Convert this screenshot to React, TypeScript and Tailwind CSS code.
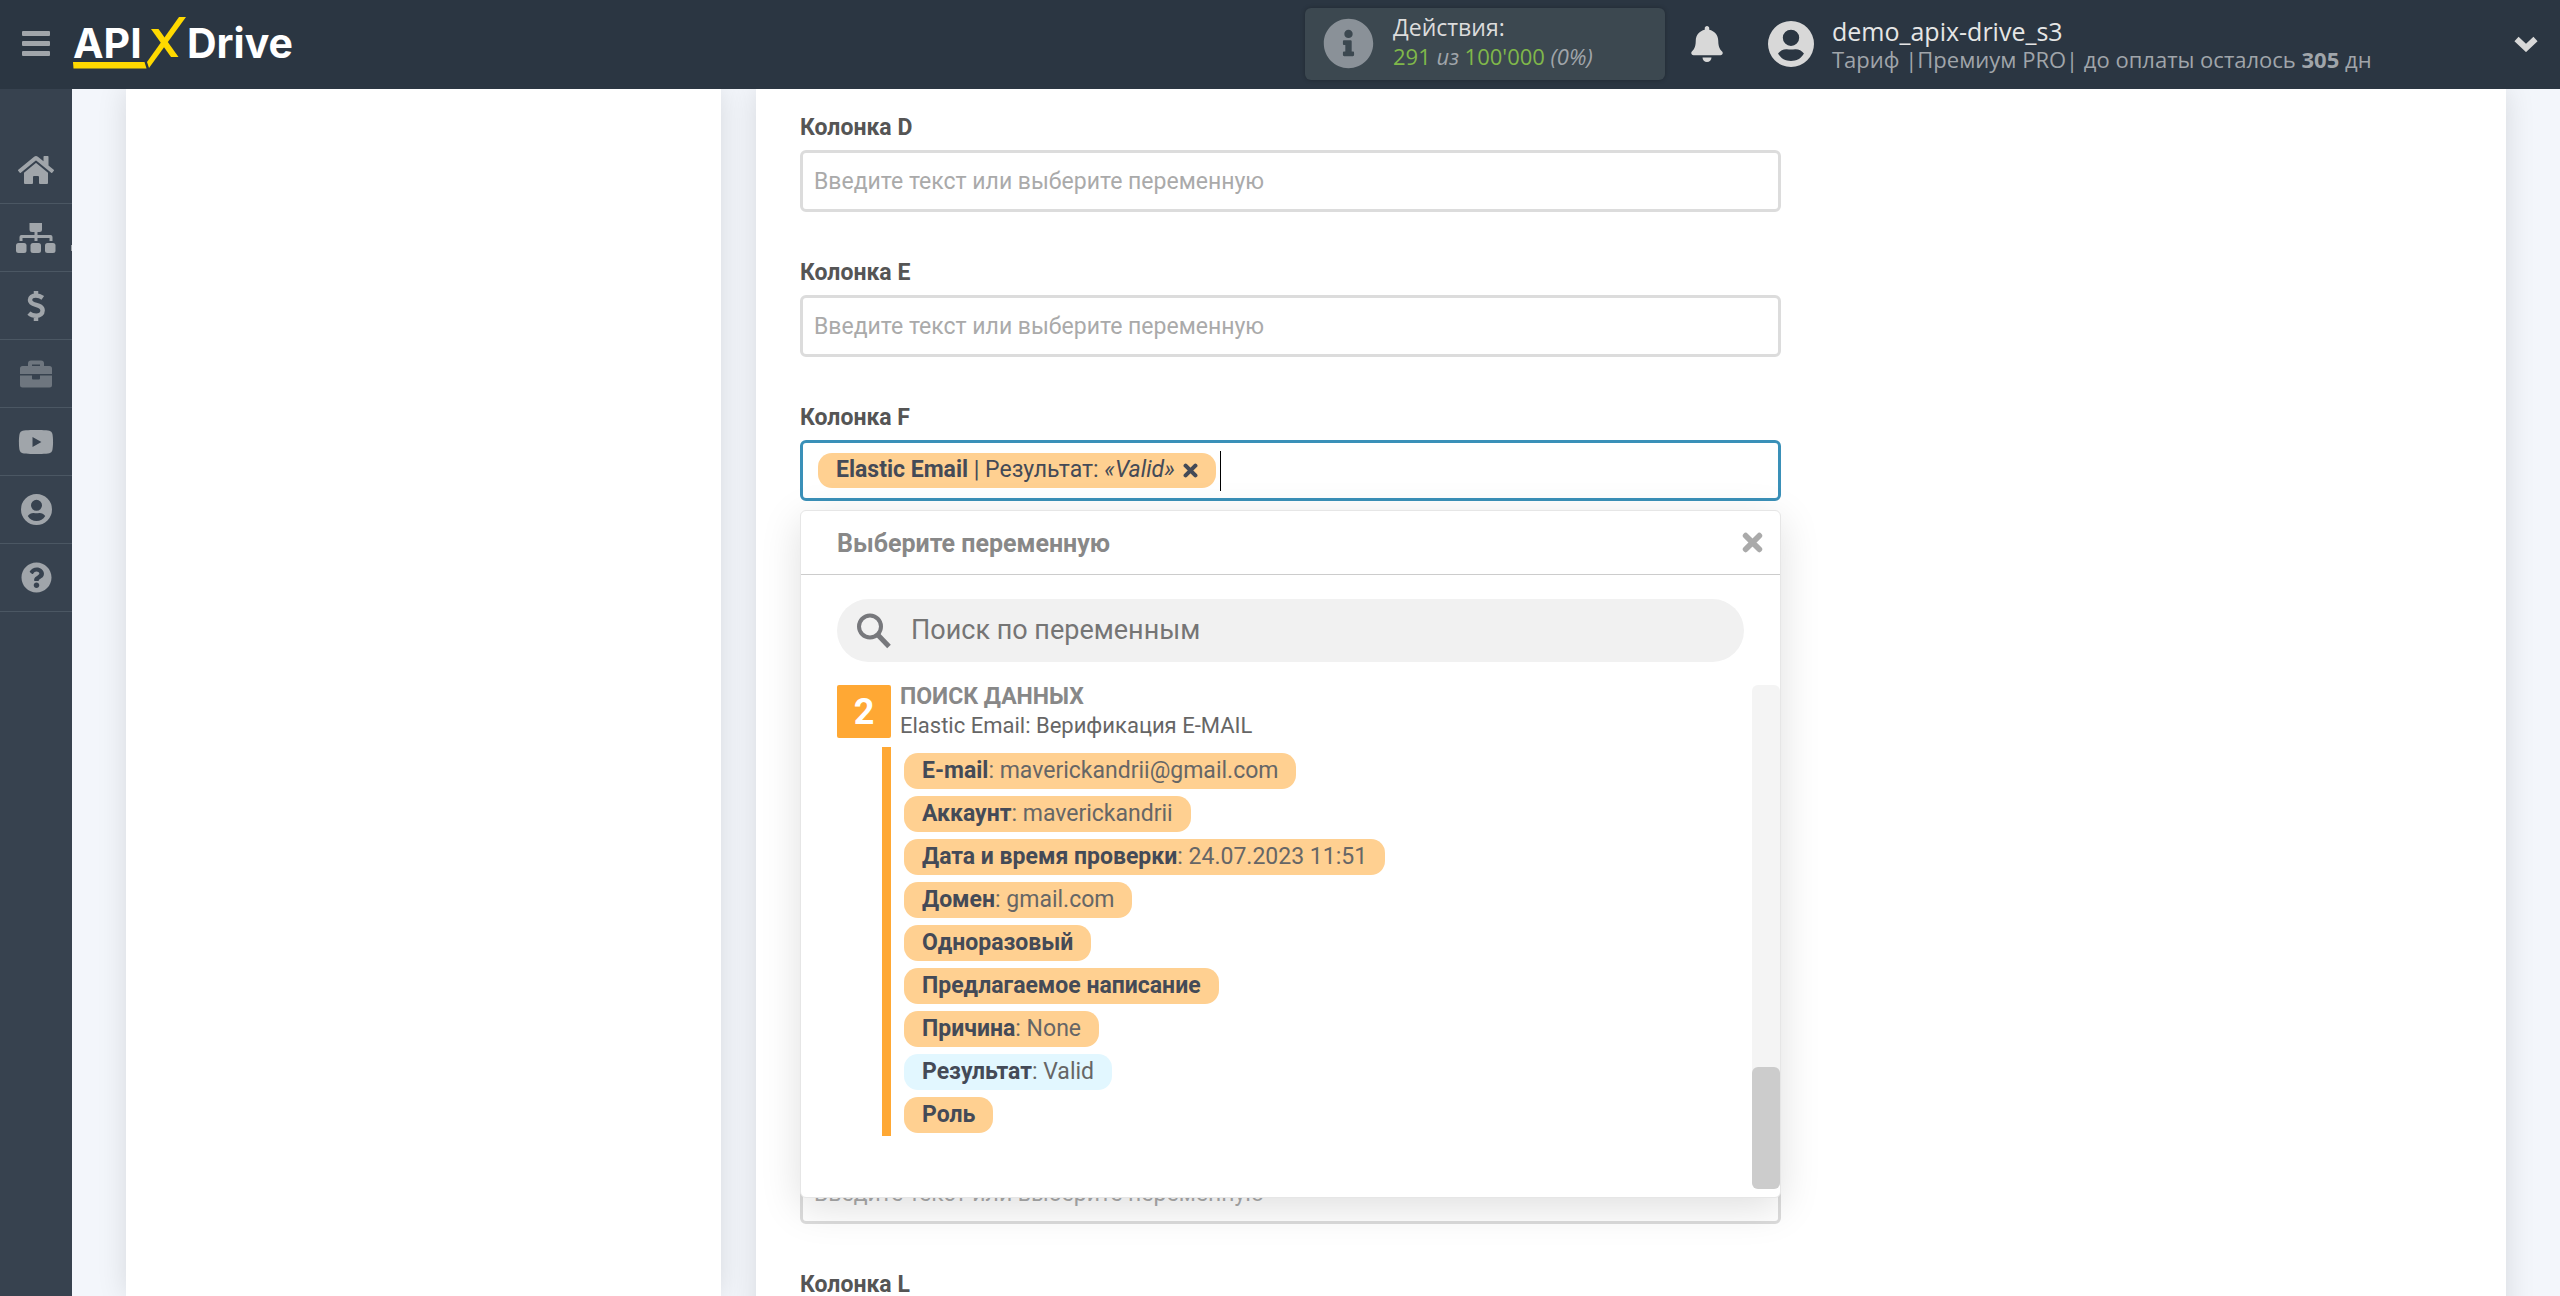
import React from "react";
import { FaBell, FaHome, FaInfoCircle, FaQuestionCircle, FaYoutube } from "react-icons/fa";

function UserIcon({ className }: { className: string }) {
  return (
    <svg viewBox="0 0 32 32" className={className} fill="currentColor" aria-hidden="true">
      <path
        fillRule="evenodd"
        d="M16 0a16 16 0 1 0 0 32a16 16 0 1 0 0-32zM16 6a5.7 5.7 0 1 1 0 11.4a5.7 5.7 0 1 1 0-11.4zM7 22.6C8.6 20.4 11 19.4 13.2 19.6C15 20 17 20 18.8 19.6C21 19.4 23.4 20.4 25 22.6C23 26.2 19.8 27.8 16 27.8S9 26.2 7 22.6z"
      />
    </svg>
  );
}

function SitemapIcon() {
  return (
    <svg viewBox="0 0 40 30" className="h-[30px] w-10" fill="currentColor" aria-hidden="true">
      <path d="M13.500 0H26V6.500a2.500 2.500 0 0 1-2.500 2.500H16a2.500 2.500 0 0 1-2.500-2.500z" />
      <path d="M18.500 8h3v10h-3z" />
      <path d="M3.500 18v-4a2 2 0 0 1 2-2h29a2 2 0 0 1 2 2v4h-3v-3h-27v3z" />
      <rect x="0" y="20" width="10.500" height="10" rx="2.500" />
      <rect x="14.500" y="20" width="10.500" height="10" rx="2.500" />
      <rect x="29" y="20" width="10.500" height="10" rx="2.500" />
    </svg>
  );
}

function DollarIcon() {
  return (
    <svg viewBox="0 0 18 30" className="h-[30px] w-[18px]" fill="none" stroke="currentColor" strokeWidth="4.500" aria-hidden="true">
      <path d="M15.800 6.800C13.500 5.200 11.200 4.600 8.800 4.600C5.400 4.600 3 6.300 3 8.900C3 15.500 15.600 12.200 15.600 19.500C15.600 22.600 13 24.800 9.200 24.800C6.400 24.800 4 24 1.900 22.100M9 0v5M9 24v6" />
    </svg>
  );
}

function BriefcaseIcon() {
  return (
    <svg viewBox="0 0 32 28" className="h-7 w-8" fill="currentColor" aria-hidden="true">
      <path
        fillRule="evenodd"
        d="M8 6V3.500A3 3 0 0 1 11 .5H21A3 3 0 0 1 24 3.500V6H29.500A2.500 2.500 0 0 1 32 8.500V14H0V8.500A2.500 2.500 0 0 1 2.500 6zM12 4.500V6H20V4.500z"
      />
      <path d="M0 15.500H12V18.500A1 1 0 0 0 13 19.500H19A1 1 0 0 0 20 18.500V15.500H32V25A2.500 2.500 0 0 1 29.500 27.500H2.500A2.500 2.500 0 0 1 0 25z" />
    </svg>
  );
}

function CrossIcon({ className }: { className: string }) {
  return (
    <svg viewBox="0 0 20 20" className={className} stroke="currentColor" strokeWidth="5.500" strokeLinecap="round" aria-hidden="true">
      <path d="M3.500 3.500L16.500 16.500M16.500 3.500L3.500 16.500" />
    </svg>
  );
}

function Logo() {
  return (
    <a href="#" aria-label="APIXDrive" className="relative flex h-14 w-[220px] items-center justify-between font-['Inter',sans-serif] text-[41px] leading-[54px] font-bold text-white">
      <span>API</span>
      <span>Drive</span>
      <svg viewBox="0 0 220 56" className="absolute inset-0 h-14 w-[220px]" fill="#ffd900" aria-hidden="true">
        <path d="M106 2H113L76 53L74 47z" />
        <path d="M78 14H85.500L105.500 42H98z" />
        <path d="M0 47H71.500L73.500 53.500H0.500z" />
      </svg>
    </a>
  );
}

function Header() {
  return (
    <header className="relative z-20 flex h-[89px] shrink-0 items-center bg-[#2b3642] pb-0.5 font-['Open_Sans',sans-serif]">
      <button aria-label="Меню" className="ml-[22px] flex w-7 flex-col gap-[5px]">
        <span className="h-[5px] w-full rounded-[1px] bg-[#a0a5aa]" />
        <span className="h-[5px] w-full rounded-[1px] bg-[#a0a5aa]" />
        <span className="h-[5px] w-full rounded-[1px] bg-[#a0a5aa]" />
      </button>
      <div className="ml-[23px] pb-0.5">
        <Logo />
      </div>
      <div className="ml-auto flex h-[72px] w-[360px] items-center gap-[19px] rounded-md bg-[#3c4850] pl-[18px] shadow-[0_0_4px_rgba(0,0,0,0.25)]">
        <FaInfoCircle className="size-[51px] text-[#8a9198]" />
        <div className="pb-1 text-[22px] leading-[29px]">
          <p className="text-[23px] text-[#dcdcdc]">Действия:</p>
          <p className="text-[#a0a5aa]">
            <span className="text-[#80b84a]">291</span> <i>из</i> <span className="text-[#80b84a]">100'000</span> <i>(0%)</i>
          </p>
        </div>
      </div>
      <button aria-label="Уведомления" className="ml-[26px] text-[#d8d8d8]">
        <FaBell className="h-9 w-8" />
      </button>
      <button className="ml-[45px] flex w-[792px] items-center text-left">
        <UserIcon className="size-[46px] shrink-0 text-[#d8d8d8]" />
        <span className="ml-[18px] block pt-0.5">
          <span className="block text-[25px] leading-7 text-[#e6e6e6]">demo_apix-drive_s3</span>
          <span className="block text-[22px] leading-7 text-[#a0a5aa]">
            Тариф |Премиум PRO| до оплаты осталось <b>305</b> дн
          </span>
        </span>
        <svg viewBox="0 0 24 16" className="mr-[22px] ml-auto h-4 w-6 text-[#d8d8d8]" fill="none" stroke="currentColor" strokeWidth="6" aria-hidden="true">
          <path d="M2.500 3L12 12L21.500 3" strokeLinejoin="miter" />
        </svg>
      </button>
    </header>
  );
}

const NAV = [
  { label: "Главная", icon: <FaHome className="h-9 w-9" /> },
  { label: "Связи", icon: <SitemapIcon />, open: true },
  { label: "Оплата", icon: <DollarIcon /> },
  { label: "Проекты", icon: <BriefcaseIcon />, dim: true },
  { label: "Видео", icon: <FaYoutube className="size-9" /> },
  { label: "Профиль", icon: <UserIcon className="size-[31px]" /> },
  { label: "Помощь", icon: <FaQuestionCircle className="size-[31px]" /> },
];

function Sidebar() {
  return (
    <nav className="w-[72px] shrink-0 bg-[#37424f] pt-[47px]">
      {NAV.map((item) => (
        <a
          key={item.label}
          href="#"
          aria-label={item.label}
          className={
            "relative flex h-[68px] items-center justify-center border-b border-[#4b5763] " +
            (item.dim ? "text-[#6e767f]" : "text-[#a0a5aa]")
          }
        >
          {item.icon}
          {item.open && <span className="absolute right-0 bottom-5 h-1.5 w-px bg-[#a0a5aa]" />}
        </a>
      ))}
    </nav>
  );
}

function Field({ name, tall = true }: { name: string; tall?: boolean }) {
  return (
    <div>
      <label htmlFor={"col" + name} className="block text-[23px] leading-[30px] font-bold text-[#555]">
        Колонка {name}
      </label>
      <input
        id={"col" + name}
        placeholder="Введите текст или выберите переменную"
        className={
          "mt-[7px] block w-full rounded-md border-[3px] border-[#dcdcdc] bg-white px-[11px] text-[23px] placeholder:text-[#aaa] " +
          (tall ? "h-[62px]" : "h-[61px]")
        }
      />
    </div>
  );
}

const VARIABLES: { name: string; value?: string; selected?: boolean }[] = [
  { name: "E-mail", value: "maverickandrii@gmail.com" },
  { name: "Аккаунт", value: "maverickandrii" },
  { name: "Дата и время проверки", value: "24.07.2023 11:51" },
  { name: "Домен", value: "gmail.com" },
  { name: "Одноразовый" },
  { name: "Предлагаемое написание" },
  { name: "Причина", value: "None" },
  { name: "Результат", value: "Valid", selected: true },
  { name: "Роль" },
];

function VariablePicker() {
  return (
    <div className="absolute inset-x-0 top-full z-10 mt-[9px] rounded-md border border-[#e6e6e6] bg-white pb-2 shadow-[0_10px_40px_rgba(0,0,0,0.13)]">
      <div className="flex h-16 items-center justify-between border-b border-[#ccc] pr-[17px] pl-9">
        <h2 className="pt-0.5 text-[25px] font-bold text-[#888]">Выберите переменную</h2>
        <button aria-label="Закрыть" className="text-[#aaa]">
          <CrossIcon className="size-[21px]" />
        </button>
      </div>
      <label className="mt-6 mr-9 ml-9 flex h-[63px] items-center rounded-full bg-[#f1f1f1] pl-5">
        <svg viewBox="0 0 34 36" className="h-9 w-[34px] text-[#77787c]" fill="none" stroke="currentColor" strokeWidth="4" aria-label="Поиск">
          <circle cx="13" cy="13.500" r="11" />
          <path d="M20.500 21.500L32 33.500" strokeWidth="5" />
        </svg>
        <input placeholder="Поиск по переменным" className="ml-5 min-w-0 flex-1 text-[27px] outline-none placeholder:text-[#757575]" />
      </label>
      <div className="mt-[23px] flex h-[504px] pl-9">
        <div className="flex-1">
          <div className="flex items-start gap-[9px]">
            <span className="flex h-[53px] w-[54px] items-center justify-center rounded-xs bg-[#ffa834] text-4xl font-bold text-white">2</span>
            <div>
              <h3 className="text-[23px] leading-6 font-bold text-[#888]">ПОИСК ДАННЫХ</h3>
              <p className="mt-[3px] text-[22px] leading-7 text-[#666]">Elastic Email: Верификация E-MAIL</p>
            </div>
          </div>
          <ul className="mt-[7px] ml-[45px] flex flex-col items-start gap-[7px] border-l-[9px] border-[#ffa834] pt-1.5 pb-[3px] pl-[13px]">
            {VARIABLES.map((v) => (
              <li key={v.name}>
                <button
                  className={
                    "block h-9 rounded-[14px] px-[18px] text-[23px] leading-9 text-[#666] " +
                    (v.selected ? "bg-[#e2f7ff]" : "bg-[#ffd091]")
                  }
                >
                  <b className="text-[#444a57]">{v.name}</b>
                  {v.value && ": " + v.value}
                </button>
              </li>
            ))}
          </ul>
        </div>
        <div className="flex w-7 items-end rounded-md bg-[#f4f4f4]">
          <div className="h-[122px] w-7 rounded-md bg-[#ccc]" />
        </div>
      </div>
    </div>
  );
}

function ActiveField() {
  return (
    <div>
      <label htmlFor="colF" className="block text-[23px] leading-[30px] font-bold text-[#555]">
        Колонка F
      </label>
      <div className="relative mt-[7px]">
        <div className="flex h-[61px] items-center rounded-md border-[3px] border-[#3a90b8] bg-white pl-[15px]">
          <span className="flex h-[35px] items-center rounded-[14px] bg-[#ffd091] px-[18px] text-[23px] whitespace-pre text-[#444a57]">
            <b>Elastic Email</b> | Результат: <i>«Valid»</i>
            <button aria-label="Удалить" className="ml-2">
              <CrossIcon className="size-[15px]" />
            </button>
          </span>
          <span className="ml-1 h-10 w-px bg-black" />
          <input id="colF" className="min-w-0 flex-1 outline-none" />
        </div>
        <VariablePicker />
      </div>
    </div>
  );
}

export default function App() {
  return (
    <div className="flex h-screen flex-col overflow-hidden font-['Roboto',sans-serif]">
      <Header />
      <div className="flex min-h-0 flex-1">
        <Sidebar />
        <main className="flex flex-1 items-start gap-[35px] overflow-hidden bg-[#f3f6fb] px-[54px]">
          <aside className="h-full w-1/4 bg-white shadow-[0_0_28px_rgba(0,0,0,0.12)]" />
          <section className="min-h-full min-w-0 flex-1 bg-white px-11 pt-6 shadow-[0_0_28px_rgba(0,0,0,0.12)]">
            <form className="flex w-[59%] flex-col gap-[46px]">
              <Field name="D" />
              <Field name="E" />
              <ActiveField />
              <Field name="G" tall={false} />
              <Field name="H" tall={false} />
              <Field name="I" />
              <Field name="J" />
              <Field name="K" />
              <Field name="L" />
            </form>
          </section>
        </main>
      </div>
    </div>
  );
}
